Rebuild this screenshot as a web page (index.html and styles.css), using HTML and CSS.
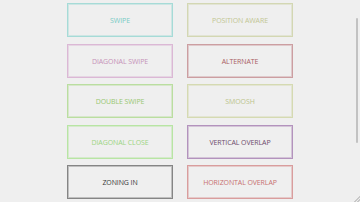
FILE: index.html
```html
<!DOCTYPE html>
<html lang="en">
<head>
<meta charset="utf-8">
<title>Buttons</title>
<link rel="stylesheet" href="styles.css">
</head>
<body>
<main class="grid">
  <button class="btn swipe">SWIPE</button>
  <button class="btn position">POSITION AWARE</button>
  <button class="btn diagonal-swipe">DIAGONAL SWIPE</button>
  <button class="btn alternate">ALTERNATE</button>
  <button class="btn double-swipe">DOUBLE SWIPE</button>
  <button class="btn smoosh">SMOOSH</button>
  <button class="btn diagonal-close">DIAGONAL CLOSE</button>
  <button class="btn vertical">VERTICAL OVERLAP</button>
  <button class="btn zoning">ZONING IN</button>
  <button class="btn horizontal">HORIZONTAL OVERLAP</button>
</main>
<div class="scrollbar"></div>
<div class="resizer"></div>
</body>
</html>
```
FILE: styles.css
```css
html, body {
  margin: 0;
  padding: 0;
  background: #efefef;
  height: 100%;
  overflow: hidden;
}
.grid {
  display: grid;
  grid-template-columns: 106px 106px;
  grid-auto-rows: 34px;
  column-gap: 14px;
  row-gap: 6.4px;
  justify-content: center;
  padding-top: 3.4px;
}
.btn {
  --b: #999;
  box-sizing: border-box;
  margin: 0;
  padding: 1px 0 0;
  background: transparent;
  border: 1px solid var(--b);
  box-shadow: inset 0 0 0 1px color-mix(in srgb, var(--b) 45%, transparent);
  font-family: "Open Sans", "Liberation Sans", sans-serif;
  font-size: 7px;
  letter-spacing: -0.1px;
  line-height: 1;
  text-align: center;
}
.swipe { --b: #a6dbd7; color: #79cbc5; }
.position { --b: #d3d7b3; color: #c2c693; }
.diagonal-swipe { --b: #dbb8d5; color: #c692b8; }
.alternate { --b: #cc9ea1; color: #a95e63; }
.double-swipe { --b: #badea0; color: #98c772; }
.smoosh { --b: #d5dab2; color: #bcc48d; }
.diagonal-close { --b: #b8e5a4; color: #9cd582; }
.vertical { --b: #b393bd; color: #6d4b6b; }
.zoning { --b: #858585; color: #383838; }
.horizontal { --b: #d99d9d; color: #c76f6f; }
.scrollbar {
  position: fixed;
  right: 2px;
  top: 18px;
  width: 2px;
  height: 125px;
  background: #c2c2c2;
  border-radius: 1px;
}
.resizer {
  position: fixed;
  right: 0;
  bottom: 0;
  width: 6px;
  height: 6px;
  background: linear-gradient(135deg, transparent 50%, #c8c8c8 50%, #c8c8c8 60%, transparent 60%, transparent 75%, #c8c8c8 75%, #c8c8c8 85%, transparent 85%);
}
```
